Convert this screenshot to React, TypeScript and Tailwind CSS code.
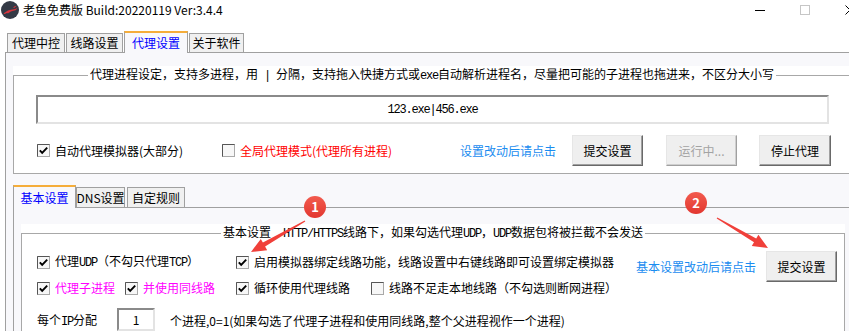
import type { ReactNode } from 'react'
import { clsx } from 'clsx'

// classic WinForms-like proxy settings window

function CheckBox({ checked }: { checked?: boolean }) {
  return (
    <svg width="13" height="13" viewBox="0 0 13 13" className="shrink-0">
      <rect x="0.5" y="0.5" width="12" height="12" fill="#f7f7f7" stroke="#a9a9a9" />
      <path d="M0.5 12.5V0.5H12.5" fill="none" stroke="#555" />
      {checked && <path d="M2.8 6.3l2.4 2.6L10.2 3.6" fill="none" stroke="#000" strokeWidth="1.9" />}
    </svg>
  )
}

// half-width latin like the bitmap font of the original
function Lat({ children }: { children: ReactNode }) {
  return (
    <span className="whitespace-pre font-['Liberation_Mono',monospace] text-[12px] tracking-[-1.2px]">
      {children}
    </span>
  )
}

function Item({ checked, children, className, textClass }: { checked?: boolean; children: ReactNode; className?: string; textClass?: string }) {
  return (
    <div className={clsx('flex h-[16px] shrink-0 items-center', className)}>
      <CheckBox checked={checked} />
      <span className={clsx('ml-[5px] whitespace-nowrap', textClass)}>{children}</span>
    </div>
  )
}

function Btn({ children, disabled, className }: { children: ReactNode; disabled?: boolean; className?: string }) {
  return (
    <div
      className={clsx(
        'flex h-[31px] shrink-0 items-center justify-center border bg-[#efefef] whitespace-nowrap',
        'border-l-[#e6e6e6] border-t-[#e6e6e6]',
        disabled
          ? 'border-r-[#a0a0a0] border-b-[#a0a0a0] text-[#a3a3a3] shadow-[inset_-1px_-1px_0_#cfcfcf]'
          : 'border-r-[#696969] border-b-[#696969] text-black shadow-[inset_-1px_-1px_0_#a0a0a0]',
        className
      )}
    >
      {children}
    </div>
  )
}

function Tab({ children, active, className }: { children: ReactNode; active?: boolean; className?: string }) {
  return active ? (
    <div
      className={clsx(
        'relative z-10 -mb-px flex shrink-0 items-center justify-center border-x border-t-2 border-x-[#a0a0a0] border-t-[#f5ad3a] bg-[#f8f8fb] text-[#0000ff] whitespace-nowrap',
        className
      )}
    >
      {children}
    </div>
  ) : (
    <div
      className={clsx(
        'flex shrink-0 items-center justify-center border border-b-0 border-[#a0a0a0] bg-[#f0f0f0] whitespace-nowrap',
        className
      )}
    >
      {children}
    </div>
  )
}

function TitleBar() {
  return (
    <div className="flex h-[30px] items-start bg-white">
      <svg width="18" height="18" viewBox="0 0 18 18" className="ml-[1px] mt-[1px] shrink-0">
        <circle cx="9" cy="9" r="9" fill="#343a46" />
        <path d="M2.5 12.5C5 10 8.5 8.6 13 8.2c1.4-.1 2.6-.8 3.4-1.8-.3 1.6-1.5 2.7-3 3-2.5.5-4.6 1.4-6.6 3-.6-.6-1.4-.5-2 .2-.5.6-1.6.5-2.3-.1z" fill="#d7343c" />
        <path d="M12.2 6.4c.9-.9 2-1.4 3.2-1.4-.6.8-1.4 1.5-2.4 1.9z" fill="#d7343c" />
      </svg>
      <span className="ml-[4px] mt-[2px] whitespace-nowrap">老鱼免费版 Build:20220119 Ver:3.4.4</span>
      <div className="flex-1" />
      <div className="-mr-[6px] flex w-[100px] shrink-0 items-start pt-[5px]">
        <div className="mt-[5px] h-px w-[10px] bg-black" />
        <div className="ml-[35px] h-[10px] w-[10px] border border-[#c6c6c6]" />
        <svg width="10" height="10" viewBox="0 0 10 10" className="ml-[35px]">
          <path d="M0.5 0.5l9 9M9.5 0.5l-9 9" stroke="#000" />
        </svg>
      </div>
    </div>
  )
}

export default function App() {
  return (
    <div className="relative h-[331px] w-[849px] overflow-hidden bg-white font-['Noto_Sans_CJK_SC',sans-serif] text-[12px] leading-[16px] text-black">
      <TitleBar />

      {/* main tabs */}
      <div className="flex h-[22px] items-end pl-[7px]">
        <Tab className="h-[19px] w-[58px]">代理中控</Tab>
        <Tab className="ml-px h-[19px] w-[57px]">线路设置</Tab>
        <Tab active className="ml-px h-[22px] w-[64px]">代理设置</Tab>
        <Tab className="ml-px h-[19px] w-[55px]">关于软件</Tab>
      </div>

      <div className="ml-[5px] h-[300px] border-l border-t border-[#a0a0a0] bg-[#f8f8fb] pl-[7px] pt-[13px]">
        {/* process group */}
        <div className="w-[850px] bg-white">
          <fieldset className="border border-[#a8a8a8] pb-[7px]">
            <legend className="ml-[74px] px-[2px] whitespace-nowrap">
              代理进程设定，支持多进程，用<Lat> | </Lat>分隔，支持拖入快捷方式或<Lat>exe</Lat>自动解析进程名，尽量把可能的子进程也拖进来，不区分大小写
            </legend>
            <div className="ml-[22px] mt-[11px] flex h-[29px] w-[793px] items-center justify-center border-2 border-b-[#e3e3e3] border-l-[#8a8a8a] border-r-[#e3e3e3] border-t-[#8a8a8a] bg-white">
              <Lat>123.exe|456.exe</Lat>
            </div>
            <div className="mt-[11px] flex h-[31px] items-center pl-[23px]">
              <Item checked className="w-[185px]">自动代理模拟器(大部分)</Item>
              <Item className="w-[238px]" textClass="text-[#ff0000]">
                全局代理模式(代理所有进程)
              </Item>
              <span className="w-[112px] shrink-0 whitespace-nowrap text-[#1a8cf0]">设置改动后请点击</span>
              <Btn className="w-[71px]">提交设置</Btn>
              <Btn disabled className="ml-[23px] w-[71px]">运行中...</Btn>
              <Btn className="ml-[22px] w-[72px]">停止代理</Btn>
            </div>
          </fieldset>
        </div>

        {/* sub tabs */}
        <div className="flex h-[33px] items-end">
          <Tab active className="h-[23px] w-[63px]">基本设置</Tab>
          <Tab className="h-[20px] w-[49px]">DNS设置</Tab>
          <Tab className="ml-[2px] h-[20px] w-[58px]">自定规则</Tab>
        </div>

        <div className="h-[200px] border-l border-t border-[#a0a0a0] bg-[#f8f8fb] pl-[7px] pt-[16px]">
          <div className="w-[824px] bg-white">
            <fieldset className="h-[130px] border border-[#a8a8a8]">
              <legend className="ml-[199px] px-[2px] whitespace-nowrap">
                基本设置<Lat>  HTTP/HTTPS</Lat>线路下，如果勾选代理<Lat>UDP</Lat>，<Lat>UDP</Lat>数据包将被拦截不会发送
              </legend>

              <div className="mt-[9px] flex h-[29px] items-start pl-[15px]">
                <Item checked className="mt-[3px] w-[199px]">
                  代理<Lat>UDP</Lat>（不勾只代理<Lat>TCP</Lat>）
                </Item>
                <Item checked className="mt-[3px] w-[400px]">
                  启用模拟器绑定线路功能，线路设置中右键线路即可设置绑定模拟器
                </Item>
                <span className="mt-[8px] w-[130px] shrink-0 whitespace-nowrap text-[#1a8cf0]">基本设置改动后请点击</span>
                <Btn className="h-[30px] w-[71px]">提交设置</Btn>
              </div>

              <div className="flex h-[16px] items-center pl-[15px]">
                <Item checked className="w-[88px]" textClass="text-[#ff00ff]">代理子进程</Item>
                <Item checked className="w-[111px]" textClass="text-[#ff00ff]">并使用同线路</Item>
                <Item checked className="w-[135px]">循环使用代理线路</Item>
                <Item>线路不足走本地线路（不勾选则断网进程）</Item>
              </div>

              <div className="mt-[12px] flex h-[23px] items-center pl-[15px]">
                <span className="mt-[2px] w-[80px] shrink-0 whitespace-nowrap">
                  每个<Lat>IP</Lat>分配
                </span>
                <div className="flex h-[23px] w-[38px] shrink-0 items-center justify-center border-2 border-b-[#e3e3e3] border-l-[#8a8a8a] border-r-[#e3e3e3] border-t-[#8a8a8a] bg-white">
                  1
                </div>
                <span className="ml-[15px] mt-[2px] whitespace-nowrap">
                  个进程,0=1(如果勾选了代理子进程和使用同线路,整个父进程视作一个进程)
                </span>
              </div>
            </fieldset>
          </div>
        </div>
      </div>

      {/* annotation overlay */}
      <svg className="pointer-events-none absolute left-0 top-0" width="849" height="331">
        <polygon
          points="305.3,221.5 265.1,246.4 267.2,250.2 251,252 260.8,238.9 262.9,242.6 304.7,220.5"
          fill="#f0403a"
        />
        <polygon
          points="716.7,218.5 754,242.3 751.8,246 768,248 758.4,234.8 756.2,238.5 717.3,217.5"
          fill="#f0403a"
        />
      </svg>
      <div className="absolute left-[304px] top-[196px] flex h-[22px] w-[22px] items-center justify-center rounded-full bg-gradient-to-b from-[#f25a4e] to-[#e2362f] text-[13px] font-bold text-white">
        1
      </div>
      <div className="absolute left-[685px] top-[192px] flex h-[22px] w-[22px] items-center justify-center rounded-full bg-gradient-to-b from-[#f25a4e] to-[#e2362f] text-[13px] font-bold text-white">
        2
      </div>
    </div>
  )
}
